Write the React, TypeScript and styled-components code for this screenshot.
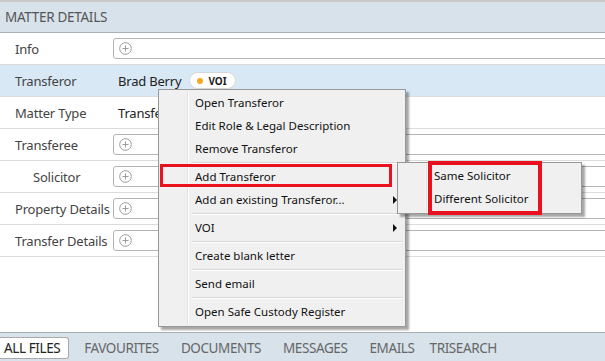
import React from "react";
import styled, { createGlobalStyle } from "styled-components";

const Global = createGlobalStyle`
  html, body { margin: 0; padding: 0; background: #fff; }
  body { font-family: "Noto Sans", "Open Sans", sans-serif; }
  * { box-sizing: border-box; }
`;

const Page = styled.div`
  position: relative;
  width: 605px;
  height: 361px;
  overflow: hidden;
  display: flex;
  flex-direction: column;
  border-top: 2px solid #c8c8c8;
  background: #fff;
`;

const Header = styled.div`
  height: 31px;
  background: #d8e2eb;
  border-bottom: 1px solid #a9b0b6;
  display: flex;
  align-items: center;
  padding-left: 5px;
  font-size: 13.5px;
  color: #555;
  letter-spacing: -0.3px;
`;

const Rows = styled.div`
  display: flex;
  flex-direction: column;
`;

const Row = styled.div<{ $selected?: boolean }>`
  height: 32px;
  display: flex;
  align-items: center;
  border-bottom: 1px solid #dcdcdc;
  background: ${(p) => (p.$selected ? "#d8e8f5" : "#fff")};
`;

const Label = styled.div<{ $indent?: boolean }>`
  width: 113px;
  flex: none;
  padding-left: ${(p) => (p.$indent ? "33px" : "15px")};
  font-size: 13px;
  color: #444;
  white-space: nowrap;
  letter-spacing: -0.2px;
`;

const InputBox = styled.div`
  flex: 1;
  height: 21px;
  margin-right: -6px;
  border: 1px solid #b4b4b4;
  border-radius: 3px;
  background: #fff;
  display: flex;
  align-items: center;
  padding-left: 5px;
`;

const Value = styled.div`
  padding-left: 5px;
  font-size: 13px;
  color: #222;
  display: flex;
  align-items: center;
  gap: 8px;
  white-space: nowrap;
  letter-spacing: -0.2px;
`;

const Badge = styled.span`
  display: inline-flex;
  align-items: center;
  gap: 5px;
  height: 17px;
  padding: 0 8px 0 7px;
  border: 1px solid #d6d6d6;
  border-radius: 9px;
  background: #fff;
  font-size: 10px;
  font-weight: 700;
  color: #222;
  letter-spacing: 0;
`;

const Dot = styled.span`
  width: 6px;
  height: 6px;
  border-radius: 50%;
  background: #f5a623;
`;

const Spacer = styled.div`
  flex: 1;
`;

const TabBar = styled.div`
  height: 29px;
  background: #d8e2eb;
  border-top: 1px solid #a9b0b6;
  display: flex;
  align-items: center;
  padding-top: 1px;
`;

const Tab = styled.div<{ $active?: boolean; $narrow?: boolean }>`
  height: 22px;
  display: flex;
  align-items: center;
  padding: ${(p) => (p.$active ? "0 8px 0 4px" : p.$narrow ? "0 3px 0 10px" : "0 10px")};
  margin-right: ${(p) => (p.$active ? "5px" : "1px")};
  font-size: 13.5px;
  color: ${(p) => (p.$active ? "#222" : "#666")};
  background: ${(p) => (p.$active ? "#fff" : "transparent")};
  border: 1px solid ${(p) => (p.$active ? "#a9a9a9" : "transparent")};
  border-left: none;
  border-radius: 0 3px 3px 0;
  white-space: nowrap;
  letter-spacing: -0.4px;
`;

const Menu = styled.div<{ $left: number; $top: number; $width: number }>`
  position: absolute;
  left: ${(p) => p.$left}px;
  top: ${(p) => p.$top}px;
  width: ${(p) => p.$width}px;
  background: #f0f0f0;
  border: 1px solid #979797;
  box-shadow: 3px 3px 2px rgba(0, 0, 0, 0.35);
  padding: 1px 2px 3px 2px;
  display: flex;
  flex-direction: column;
`;

const Gutter = styled.div<{ $left: number }>`
  position: absolute;
  top: 1px;
  bottom: 1px;
  left: ${(p) => p.$left}px;
  width: 2px;
  border-left: 1px solid #e2e3e3;
  border-right: 1px solid #fff;
`;

const Item = styled.div`
  position: relative;
  height: 23px;
  display: flex;
  align-items: center;
  padding-left: 34px;
  font-size: 11.5px;
  color: #111;
  white-space: nowrap;
`;

const Arrow = styled.span`
  position: absolute;
  right: 6px;
  top: 8px;
  width: 0;
  height: 0;
  border-top: 4px solid transparent;
  border-bottom: 4px solid transparent;
  border-left: 4px solid #111;
`;

const Sep = styled.div`
  height: 1px;
  margin: 2px 0 1px 31px;
  background: #d7d7d7;
  border-bottom: 1px solid #fff;
  box-sizing: content-box;
`;

const Mark = styled.div<{ $left: number; $top: number; $w: number; $h: number; $t: number }>`
  position: absolute;
  left: ${(p) => p.$left}px;
  top: ${(p) => p.$top}px;
  width: ${(p) => p.$w}px;
  height: ${(p) => p.$h}px;
  border: ${(p) => p.$t}px solid #e8111d;
`;

const PlusIcon = () => (
  <svg width="13" height="13" viewBox="0 0 13 13">
    <circle cx="6.5" cy="6.5" r="5.8" fill="none" stroke="#9a9a9a" strokeWidth="1" />
    <path d="M6.5 3.5v6M3.5 6.5h6" stroke="#9a9a9a" strokeWidth="1" />
  </svg>
);

export default function App() {
  return (
    <>
      <Global />
      <Page>
        <Header>MATTER DETAILS</Header>
        <Rows>
          <Row>
            <Label>Info</Label>
            <InputBox><PlusIcon /></InputBox>
          </Row>
          <Row $selected>
            <Label>Transferor</Label>
            <Value>
              Brad Berry
              <Badge><Dot />VOI</Badge>
            </Value>
          </Row>
          <Row>
            <Label>Matter Type</Label>
            <Value>Transfer</Value>
          </Row>
          <Row>
            <Label>Transferee</Label>
            <InputBox><PlusIcon /></InputBox>
          </Row>
          <Row>
            <Label $indent>Solicitor</Label>
            <InputBox><PlusIcon /></InputBox>
          </Row>
          <Row>
            <Label>Property Details</Label>
            <InputBox><PlusIcon /></InputBox>
          </Row>
          <Row>
            <Label>Transfer Details</Label>
            <InputBox><PlusIcon /></InputBox>
          </Row>
        </Rows>
        <Spacer />
        <TabBar>
          <Tab $active>ALL FILES</Tab>
          <Tab>FAVOURITES</Tab>
          <Tab>DOCUMENTS</Tab>
          <Tab>MESSAGES</Tab>
          <Tab $narrow>EMAILS</Tab>
          <Tab>TRISEARCH</Tab>
        </TabBar>

        <Menu $left={158} $top={87} $width={248}>
          <Gutter $left={28} />
          <Item>Open Transferor</Item>
          <Item>Edit Role &amp; Legal Description</Item>
          <Item>Remove Transferor</Item>
          <Sep />
          <Item>Add Transferor</Item>
          <Item>Add an existing Transferor...<Arrow /></Item>
          <Sep />
          <Item>VOI<Arrow /></Item>
          <Sep />
          <Item>Create blank letter</Item>
          <Sep />
          <Item>Send email</Item>
          <Sep />
          <Item>Open Safe Custody Register</Item>
        </Menu>

        <Menu $left={397} $top={160} $width={185}>
          <Gutter $left={28} />
          <Item>Same Solicitor</Item>
          <Item>Different Solicitor</Item>
        </Menu>

        <Mark $left={160} $top={162} $w={232} $h={23} $t={3} />
        <Mark $left={428} $top={159} $w={114} $h={54} $t={4} />
      </Page>
    </>
  );
}
